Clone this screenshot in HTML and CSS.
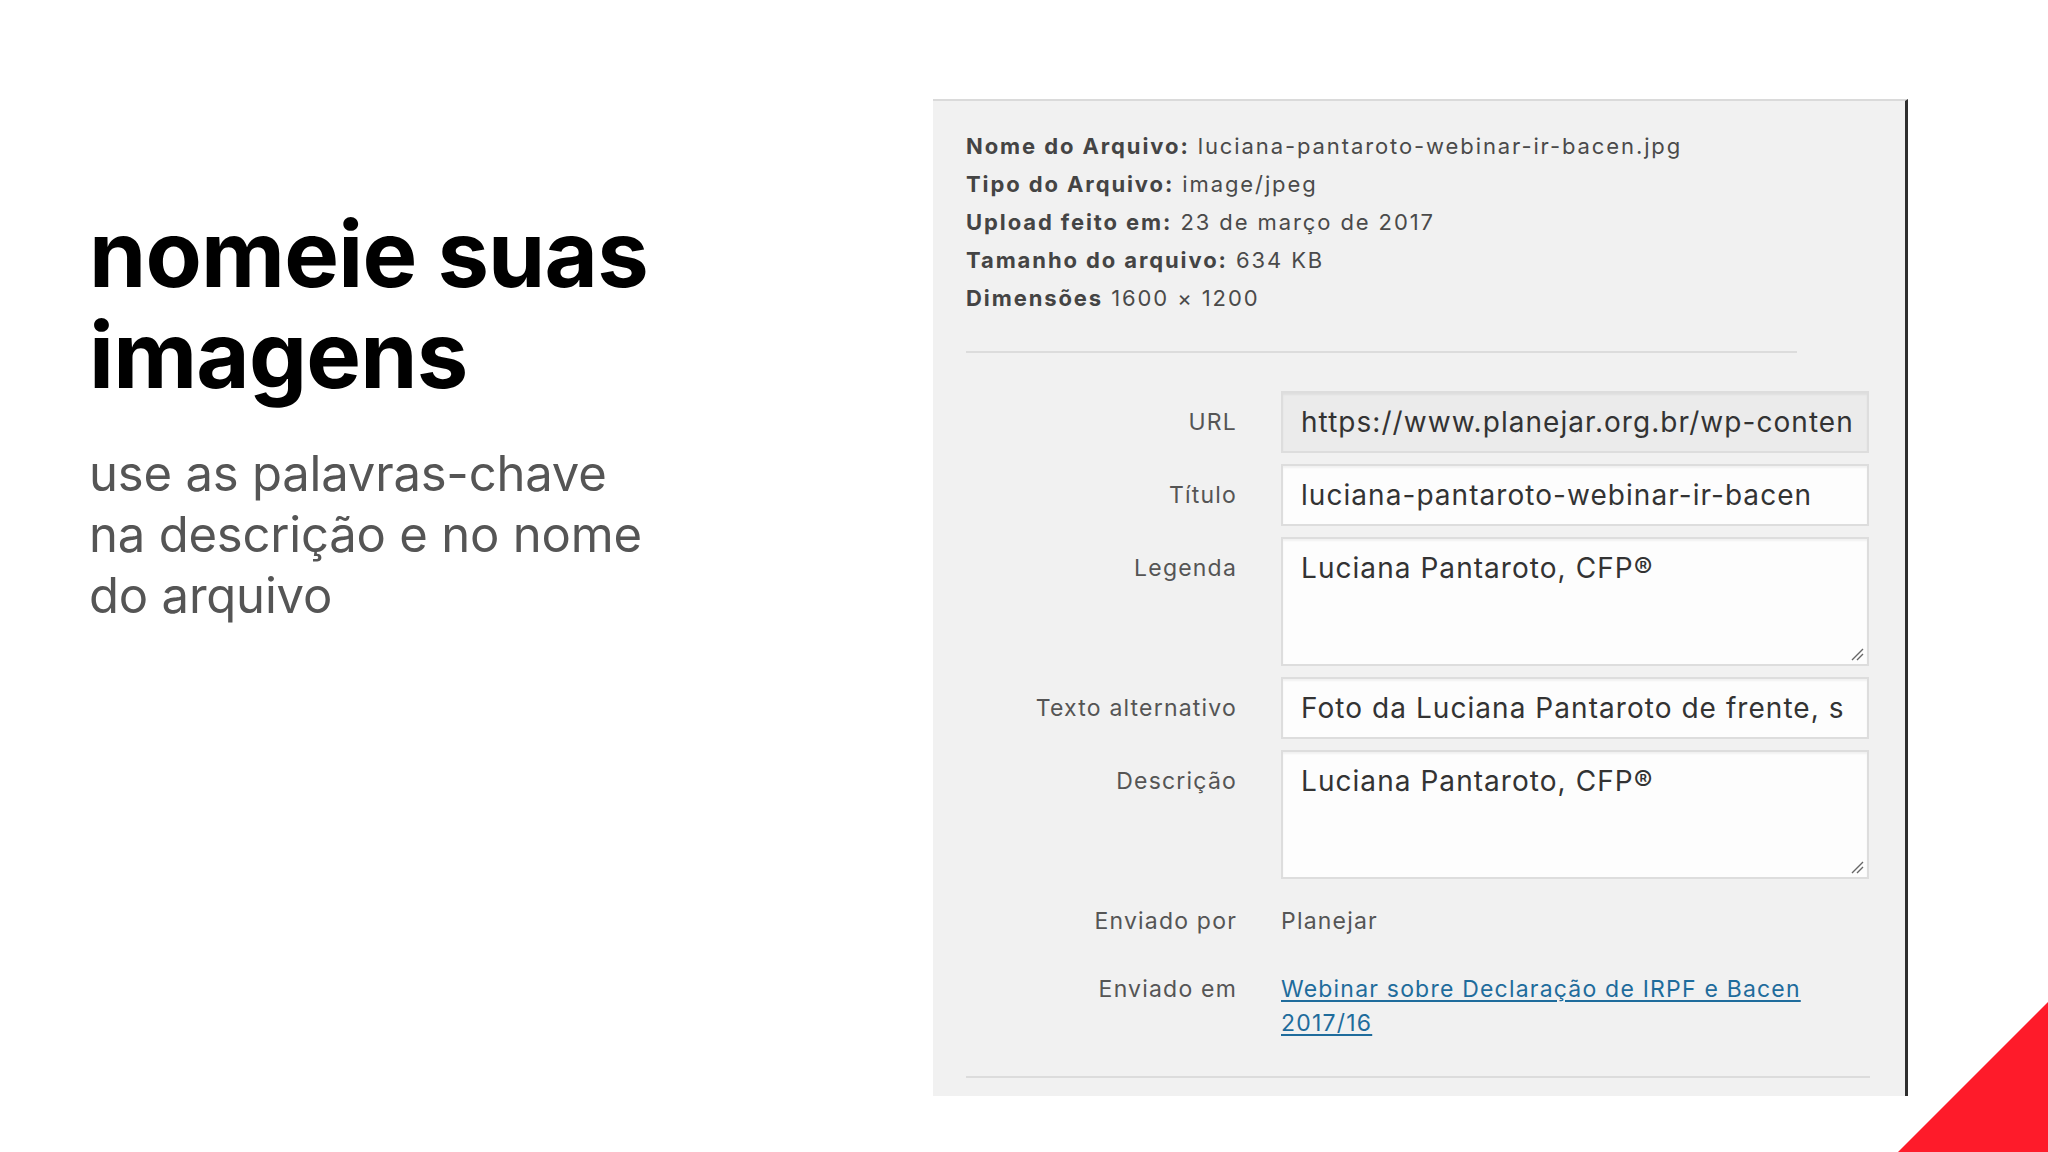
FILE: index.html
```html
<!DOCTYPE html>
<html lang="pt-BR">
<head>
<meta charset="utf-8">
<title>nomeie suas imagens</title>
<link rel="stylesheet" href="styles.css">
</head>
<body>
<main class="slide">
  <section class="intro">
    <h1 class="title">nomeie suas<br>imagens</h1>
    <p class="subtitle">use as palavras-chave<br>na descrição e no nome<br>do arquivo</p>
  </section>

  <section class="panel">
    <div class="meta">
      <div><strong>Nome do Arquivo:</strong> luciana-pantaroto-webinar-ir-bacen.jpg</div>
      <div><strong>Tipo do Arquivo:</strong> image/jpeg</div>
      <div><strong>Upload feito em:</strong> 23 de março de 2017</div>
      <div><strong>Tamanho do arquivo:</strong> 634 KB</div>
      <div><strong>Dimensões</strong> 1600 × 1200</div>
    </div>
    <hr class="sep sep-short">

    <div class="fields">
      <label class="label">URL</label>
      <div class="input readonly">https://www.planejar.org.br/wp-conten</div>

      <label class="label">Título</label>
      <div class="input">luciana-pantaroto-webinar-ir-bacen</div>

      <label class="label">Legenda</label>
      <div class="input">Luciana Pantaroto, CFP®
        <svg class="grip" width="14" height="14" viewBox="0 0 14 14"><path d="M2 13 L13 2 M7 13 L13 7" stroke="#666" stroke-width="1.4" fill="none"/></svg>
      </div>

      <label class="label">Texto alternativo</label>
      <div class="input">Foto da Luciana Pantaroto de frente, s</div>

      <label class="label">Descrição</label>
      <div class="input">Luciana Pantaroto, CFP®
        <svg class="grip" width="14" height="14" viewBox="0 0 14 14"><path d="M2 13 L13 2 M7 13 L13 7" stroke="#666" stroke-width="1.4" fill="none"/></svg>
      </div>
    </div>

    <div class="info">
      <span class="label plain">Enviado por</span>
      <span class="value">Planejar</span>
      <span class="label plain">Enviado em</span>
      <a class="value link" href="#">Webinar sobre Declaração de IRPF e Bacen 2017/16</a>
    </div>
    <hr class="sep sep-long">
  </section>

  <div class="corner"></div>
</main>
</body>
</html>
```

FILE: styles.css
```css
* { box-sizing: border-box; }

html, body {
  margin: 0;
  padding: 0;
  background: #ffffff;
}

.slide {
  position: relative;
  width: 2048px;
  height: 1152px;
  overflow: hidden;
  display: flex;
  align-items: flex-start;
  font-family: "Inter", "Liberation Sans", sans-serif;
}

.intro {
  width: 933px;
  padding-left: 89px;
  padding-top: 203px;
}

.title {
  margin: 0;
  font-family: "Inter", "Liberation Sans", sans-serif;
  font-weight: 700;
  font-size: 92px;
  line-height: 101px;
  letter-spacing: -0.8px;
  color: #000;
}

.subtitle {
  margin: 38px 0 0 0;
  font-family: "Inter", "Liberation Sans", sans-serif;
  font-weight: 400;
  font-size: 49px;
  line-height: 61px;
  letter-spacing: -0.2px;
  color: #555555;
}

.panel {
  margin-top: 99px;
  width: 975px;
  height: 997px;
  background: #f1f1f1;
  border-top: 2px solid #dadada;
  border-right: 3px solid #2f2f2f;
  padding: 26px 0 0 33px;
}

.meta {
  font-size: 22px;
  line-height: 38px;
  letter-spacing: 1.9px;
  color: #4a4a4a;
}

.meta strong {
  font-weight: 700;
  color: #444444;
}

.sep {
  margin: 0;
  border: 0;
  height: 2px;
  background: #dcdcdc;
}

.sep-short {
  width: 831px;
  margin-top: 34px;
}

.sep-long {
  width: 904px;
  margin-top: 36px;
}

.fields {
  margin-top: 38px;
  display: grid;
  grid-template-columns: 271px 588px;
  grid-template-rows: 62px 62px 129px 62px 129px;
  column-gap: 44px;
  row-gap: 11px;
}

.label {
  text-align: right;
  font-size: 23px;
  letter-spacing: 1.2px;
  line-height: 34px;
  padding-top: 14px;
  color: #555555;
}

.input {
  position: relative;
  background: #fdfdfd;
  border: 2px solid #dddddd;
  box-shadow: inset 0 2px 2px rgba(0,0,0,0.05);
  padding: 12px 10px 0 18px;
  font-size: 28px;
  line-height: 34px;
  letter-spacing: 1.05px;
  color: #333333;
  white-space: nowrap;
}

.input.readonly {
  background: #ebebeb;
}

.grip {
  position: absolute;
  right: 3px;
  bottom: 3px;
}

.info {
  margin-top: 25px;
  display: grid;
  grid-template-columns: 271px 530px;
  column-gap: 44px;
  row-gap: 34px;
  align-items: start;
}

.info .label.plain {
  padding-top: 0;
}

.value {
  font-size: 23px;
  line-height: 34px;
  letter-spacing: 1.2px;
  color: #555555;
}

.link {
  color: #1f6c9c;
  text-decoration: underline;
  text-underline-offset: 3px;
  text-decoration-thickness: 2px;
}

.corner {
  position: absolute;
  right: 0;
  bottom: 0;
  width: 150px;
  height: 150px;
  background: #fe1b2a;
  clip-path: polygon(100% 0, 100% 100%, 0 100%);
}
```
